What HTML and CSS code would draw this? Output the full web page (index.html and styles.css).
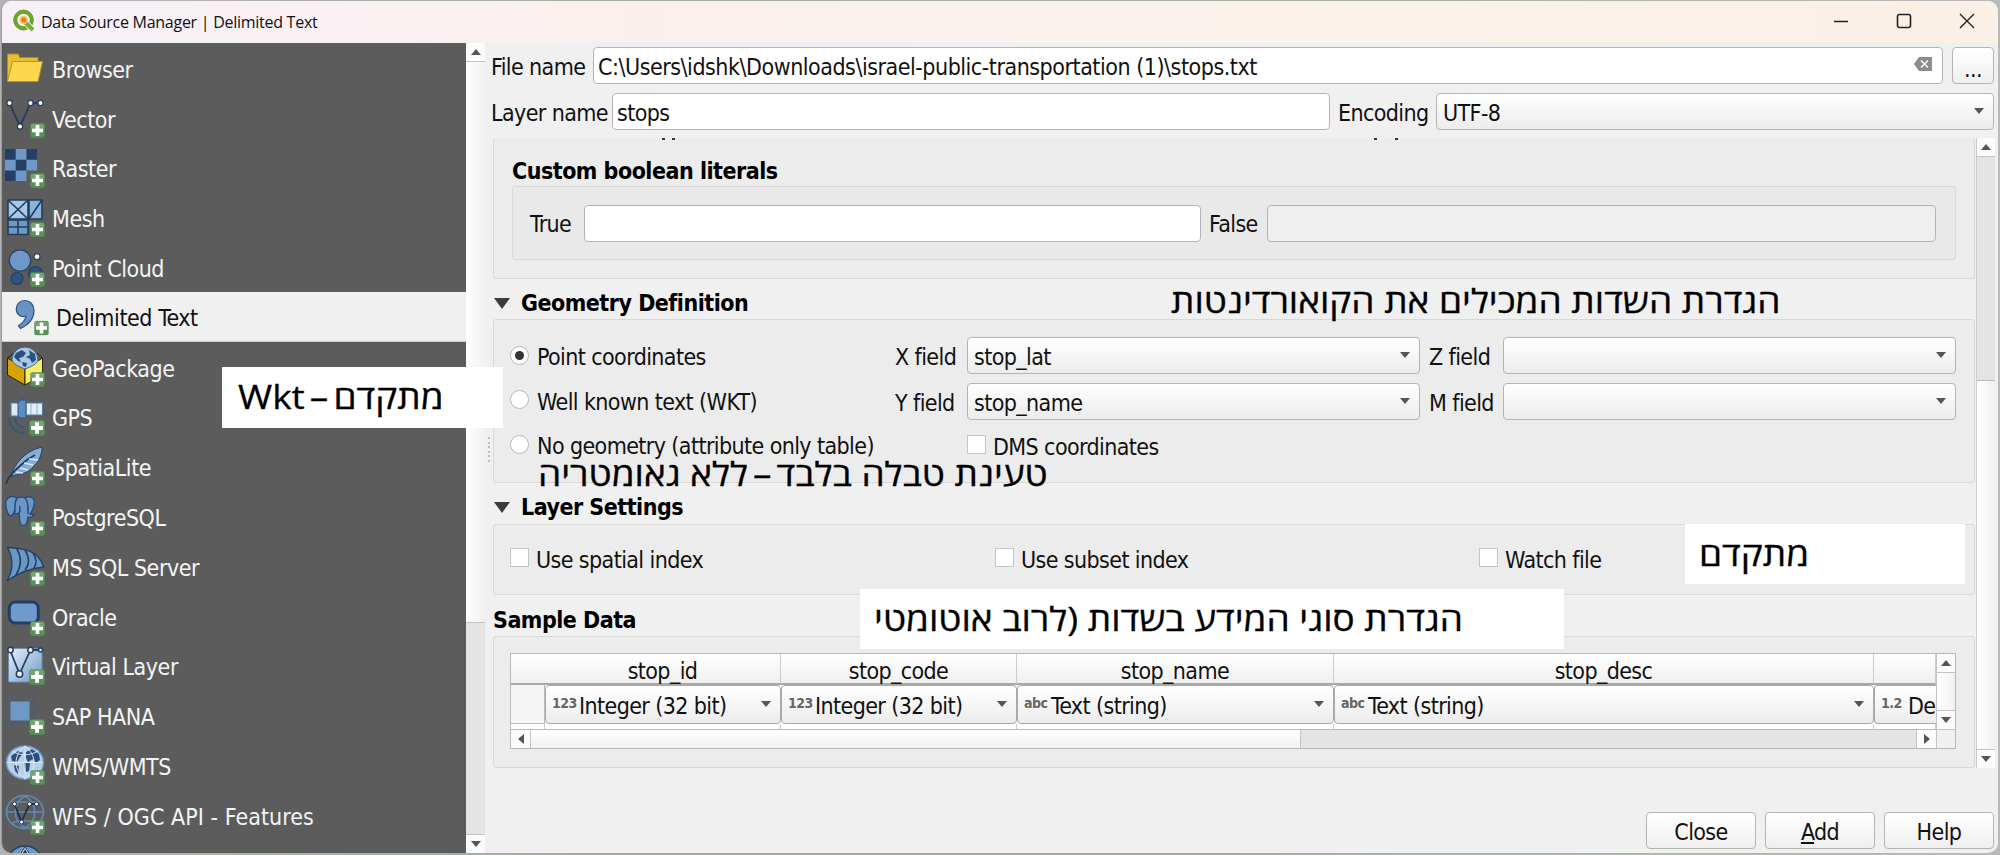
FILE: index.html
```html
<!DOCTYPE html>
<html lang="en">
<head>
<meta charset="utf-8">
<title>Data Source Manager | Delimited Text</title>
<link rel="stylesheet" href="styles.css">
</head>
<body>
<svg class="defs" width="0" height="0" aria-hidden="true">
  <defs>
    <linearGradient id="sky" x1="0" y1="0" x2="1" y2="1"><stop offset="0" stop-color="#e8f1fa"/><stop offset="1" stop-color="#6d98c8"/></linearGradient>
    <symbol id="plus" viewBox="0 0 15 15">
      <rect x=".3" y=".3" width="14.4" height="14.4" rx="2.5" fill="#579156"/>
      <rect x="1" y="1" width="13" height="6" rx="2" fill="#86b284" opacity=".6"/>
      <path d="M5.7 2h3.6v3.7H13v3.6H9.3V13H5.7V9.3H2V5.700h3.700z" fill="#fff"/>
    </symbol>
  </defs>
</svg>
<div class="window">
  <header class="titlebar">
    <svg class="logo" viewBox="0 0 24 24"><circle cx="11.500" cy="11" r="8.300" fill="none" stroke="#6fa52e" stroke-width="4.200"/><path d="M12 12l9 9" stroke="#f7f0f9" stroke-width="6"/><path d="M13 13l8 8" stroke="#76ad35" stroke-width="4"/><circle cx="11.800" cy="11" r="4.200" fill="#f6c65b"/><circle cx="11.800" cy="11" r="2.500" fill="#ee7913"/></svg>
    <span class="title">Data Source Manager | Delimited Text</span>
    <div class="controls">
      <svg viewBox="0 0 16 16"><path d="M1 8.500h14" stroke="#222" stroke-width="1.500"/></svg>
      <svg viewBox="0 0 16 16"><rect x="1.500" y="1.500" width="13" height="13" rx="2" fill="none" stroke="#222" stroke-width="1.600"/></svg>
      <svg viewBox="0 0 16 16"><path d="M1 1l14 14M15 1L1 15" stroke="#222" stroke-width="1.400"/></svg>
    </div>
  </header>
  <div class="body">
    <nav class="sidebar">
      <div class="item"><svg viewBox="1 0 48 50"><path d="M7.500 38V11h11l1 3.500H38V20" fill="#e8bf33" stroke="#b08f1c"/><path d="M12.500 18.500H42.500L38 38.500H7.500z" fill="#fdd84e" stroke="#b8971f"/></svg><span>Browser</span></div>
      <div class="item"><svg viewBox="1 0 48 50"><path d="M9.500 10L20 33.500 30.500 10h10" fill="none" stroke="#26405e" stroke-width="2"/><g fill="#fff" stroke="#26405e" stroke-width="1.200"><circle cx="9.500" cy="10" r="2.600"/><circle cx="20" cy="33.500" r="2.600"/><circle cx="30.500" cy="10" r="2.600"/><circle cx="40.500" cy="10" r="2.600"/></g><use href="#plus" x="30" y="30" width="15" height="15"/></svg><span>Vector</span></div>
      <div class="item"><svg viewBox="1 0 48 50"><path d="M5 6h32.100v21.400H26.400v10.700H5z" fill="#6d98c8"/><path d="M5 6h10.700v10.700H5zM26.400 6h10.700v10.700H26.400zM15.700 16.700h10.700v10.700H15.700zM5 27.400h10.700v10.700H5z" fill="#233f63"/><use href="#plus" x="30" y="30" width="15" height="15"/></svg><span>Raster</span></div>
      <div class="item"><svg viewBox="1 0 48 50"><g stroke="#203c5d" stroke-width="1.600"><path d="M8 8h20v19H8z" fill="#a9c7e6"/><path d="M29 8h13v19H29z" fill="#8db3db"/><path d="M8 8l20 19M28 8L8 27M42 8L29 27" fill="none"/><path d="M8 28h20v14.500H8z" fill="#6d98c8"/><path d="M18 28v14M8 35h20"/></g><use href="#plus" x="30" y="30" width="15" height="15"/></svg><span>Mesh</span></div>
      <div class="item"><svg viewBox="1 0 48 50"><g stroke="#26405e" stroke-width="1.200"><circle cx="20" cy="18.500" r="10.700" fill="#6d98c8"/><circle cx="37" cy="14.700" r="3" fill="#fff"/><circle cx="17" cy="36.500" r="6" fill="#2d5380"/><circle cx="35.500" cy="31.500" r="7" fill="#2d5380"/></g><use href="#plus" x="30" y="30" width="15" height="15"/></svg><span>Point Cloud</span></div>
      <div class="item selected"><svg viewBox="1 0 48 50"><path d="M24.500 9.500c5.500 0 9.500 4 9.500 10 0 8-5 14-13.500 18l-2-2.700c4.500-3 7-6 7.500-9.800-5 2-9.700-1.500-9.700-7 0-5 3.700-8.500 8.200-8.500z" fill="#6a93c4" stroke="#2f5686" stroke-width="1.200"/><use href="#plus" x="34" y="29.500" width="15" height="15"/></svg><span>Delimited Text</span></div>
      <div class="item"><svg viewBox="1 0 48 50"><path d="M7.500 16L25 27v16L7.500 33z" fill="#d8a300" stroke="#2b2200"/><path d="M42.500 16L25 27v16l17.500-10z" fill="#f8ee6a" stroke="#2b2200"/><path d="M7.500 16L14 11M42.500 16L37 11" stroke="#2b2200"/><path d="M12 18a13 13 0 1 1 26 0c0 3-6 6.500-13 9-7-2.500-13-6-13-9z" fill="#a9c7e6" stroke="#3f6798"/><path d="M16 11l6-3 4 3-3 4-4 1 2 4-3-1-4-4zM29 8l6 4 1 6-4 3-2-4-4-2 4-2zM22 20l5 1-1 4-3-1z" fill="#2b507d"/><use href="#plus" x="30" y="30" width="15" height="15"/></svg><span>GeoPackage</span></div>
      <div class="item"><svg viewBox="1 0 48 50"><rect x="11" y="12" width="9" height="13" fill="#dce9f5" stroke="#5078a8"/><rect x="26" y="12" width="16.500" height="12" fill="#e6eff8" stroke="#5078a8"/><path d="M31 12v12M37 12v12" stroke="#8fb0d2"/><path d="M20 9h6v18h-6l-2-3V12z" fill="#5f8cbe" stroke="#2d5380"/><path d="M9.500 27c0 9 6 15 15 15M15 27c0 5 4 9.500 9.500 9.500" fill="none" stroke="#3a567b" stroke-width="2.200"/><use href="#plus" x="29" y="29" width="16" height="16"/></svg><span>GPS</span></div>
      <div class="item"><svg viewBox="1 0 48 50"><path d="M11 35C14 24 24 10 42 6c0 7-3 15-9 20-4 5-10 7-17 8z" fill="#86add7" stroke="#26405e"/><path d="M6 43c2-7 9-14 15-19 5-5 8-7 14-10" fill="none" stroke="#203c5d" stroke-width="1.800"/><path d="M16 31l7 1M20 27l8 2M24 22l9 2M29 18l9 1" stroke="#dbe8f5" stroke-width="1.500"/><use href="#plus" x="30" y="30" width="15" height="15"/></svg><span>SpatiaLite</span></div>
      <div class="item"><svg viewBox="1 0 48 50"><path d="M8 7c3-2 7-1 9 0 3-1 6-1 8 0 4-2 8-1 9 2 1 5-1 10-4 14l4 1c-1 2-4 3-6 2-1 3 0 6-3 8-2 1-5 0-5-3l-1-9c-2 1-4 1-5-1-1 3-3 5-5 3C6 20 4 10 8 7z" fill="#6a97c8" stroke="#24497a" stroke-width="1.300"/><path d="M17 7c-3 5-2 10-2 14M25 7c4 4 3 10 3 16M19 22c2-2 0-5 1-7" fill="none" stroke="#24497a" stroke-width="1.500"/><use href="#plus" x="30" y="30" width="15" height="15"/></svg><span>PostgreSQL</span></div>
      <div class="item"><svg viewBox="1 0 48 50"><path d="M7.500 6.500C24 7 39 10 43.500 26c-12 1-25 6-37 14C13 31 14 18 7.500 6.500z" fill="#6a97c8" stroke="#24405f" stroke-width="1.400"/><path d="M17 8c5 9 4 18-1 26M25 9c5 8 4 15 0 20M33 12c4 6 4 10 1 15" fill="none" stroke="#24405f" stroke-width="1.600"/><use href="#plus" x="30" y="30" width="15" height="15"/></svg><span>MS SQL Server</span></div>
      <div class="item"><svg viewBox="1 0 48 50"><rect x="9.300" y="11" width="29" height="21" rx="6" fill="#7099cc" stroke="#223e66" stroke-width="3"/><use href="#plus" x="30" y="30" width="15" height="15"/></svg><span>Oracle</span></div>
      <div class="item"><svg viewBox="1 0 48 50"><rect x="8.500" y="8.500" width="33.500" height="33.500" rx="1" fill="url(#sky)" stroke="#6f8fb2"/><path d="M10 10l9.500 24L30.500 10M30.500 10h10" fill="none" stroke="#26405e" stroke-width="1.800"/><g fill="#eef4fa" stroke="#26405e" stroke-width="1.500"><circle cx="10.500" cy="10" r="2.700"/><circle cx="19.500" cy="34" r="3.200"/><circle cx="30.500" cy="10" r="2.700"/><circle cx="40.500" cy="10" r="2"/></g><use href="#plus" x="29" y="29" width="16" height="16"/></svg><span>Virtual Layer</span></div>
      <div class="item"><svg viewBox="1 0 48 50"><rect x="10.500" y="11.500" width="19" height="19" fill="#6d98c8"/><path d="M6.500 6.500h27v27h-27z" fill="none" stroke="#3a5a84" stroke-width="2" stroke-dasharray="2 3.400"/><use href="#plus" x="29" y="29" width="16" height="16"/></svg><span>SAP HANA</span></div>
      <div class="item"><svg viewBox="1 0 48 50"><ellipse cx="25" cy="22.500" rx="18.500" ry="16.500" fill="#b7d0ea" stroke="#6d98c8" stroke-width="1.500"/><path d="M11 16l7-5 5 2-3 4-3 5-5-1zM14 25l5 1-1 8-3-3zM26 12l6-3 7 5 1 6-4 3-3-4-5 3-2-4zM24 22l6 1-1 8-3 1z" fill="#2b507d"/><path d="M7 22.500h36M25 6v33M12 11c8 5 18 5 26 0M25 6c-12 9-12 24 0 33M25 6c12 9 12 24 0 33" fill="none" stroke="#e2edf7" stroke-width=".9"/><use href="#plus" x="30" y="30" width="15" height="15"/></svg><span>WMS/WMTS</span></div>
      <div class="item"><svg viewBox="1 0 48 50"><g fill="none" stroke="#6288b4" stroke-width="1.700"><ellipse cx="25" cy="22" rx="18.500" ry="16.500"/><path d="M7 22h36M12 12h26M25 6c-13 8-13 24 0 32M25 6c13 8 13 24 0 32M12 33c8-3 16-3 24 0"/></g><path d="M14.500 14l7 18 8-18h7" fill="none" stroke="#1e3248" stroke-width="1.800"/><g fill="#fff" stroke="#1e3248"><circle cx="14.500" cy="14" r="2"/><circle cx="21.500" cy="32" r="2"/><circle cx="29.500" cy="14" r="2"/><circle cx="36.500" cy="14" r="2"/></g><use href="#plus" x="30" y="30" width="15" height="15"/></svg><span class="wide">WFS / OGC API - Features</span></div>
      <div class="item"><svg viewBox="1 0 48 50"><circle cx="25" cy="24" r="18" fill="#6d98c8" stroke="#26405e" stroke-width="1.500"/><path d="M18 18l7-11 7 11z" fill="#fff" stroke="#26405e"/><path d="M25 9l5 9H20z" fill="#233f63"/></svg></div>
    </nav>
    <div class="vscroll side-scroll"><i class="btn up"></i><i class="thumb"></i><i class="groove"></i><i class="btn down"></i></div>
    <main class="main">
      <div class="row file-row">
        <label class="w-file">File name</label>
        <div class="input path"><span>C:\Users\idshk\Downloads\israel-public-transportation (1)\stops.txt</span>
          <svg class="clear" viewBox="0 0 18 14"><path d="M5 0h13v14H5L0 7z" fill="#8c8c8c"/><path d="M7 3.500l7 7M14 3.500l-7 7" stroke="#fff" stroke-width="1.400"/></svg></div>
        <div class="button dots">...</div>
      </div>
      <div class="row layer-row">
        <label class="w-layer">Layer name</label>
        <div class="input layer">stops</div>
        <label class="w-enc">Encoding</label>
        <div class="combo enc">UTF-8</div>
      </div>
      <div class="scroller">
        <div class="content">
          <section class="panel top-panel">
            <div class="cut"><i></i><i></i><i></i><i></i></div>
            <h2>Custom boolean literals</h2>
            <div class="panel inner">
              <label class="w-true">True</label><div class="input true"></div>
              <label class="w-false">False</label><div class="input false"></div>
            </div>
          </section>
          <h2 class="fold geo">Geometry Definition</h2>
          <section class="panel geo-panel">
            <div class="radios">
              <div class="opt"><i class="radio on"></i><span>Point coordinates</span></div>
              <div class="opt"><i class="radio"></i><span>Well known text (WKT)</span></div>
              <div class="opt"><i class="radio"></i><span>No geometry (attribute only table)</span></div>
            </div>
            <div class="fields">
              <label>X field</label><div class="combo">stop_lat</div><label class="r">Z field</label><div class="combo"></div>
              <label>Y field</label><div class="combo">stop_name</div><label class="r">M field</label><div class="combo"></div>
              <div class="opt dms"><i class="check"></i><span>DMS coordinates</span></div>
            </div>
          </section>
          <h2 class="fold lay">Layer Settings</h2>
          <section class="panel lay-panel">
            <div class="opt"><i class="check"></i><span>Use spatial index</span></div>
            <div class="opt"><i class="check"></i><span>Use subset index</span></div>
            <div class="opt"><i class="check"></i><span>Watch file</span></div>
          </section>
          <h2 class="sample">Sample Data</h2>
          <section class="panel sample-panel">
            <div class="table">
              <div class="grid">
                <div class="th corner"></div><div class="th">stop_id</div><div class="th">stop_code</div><div class="th">stop_name</div><div class="th">stop_desc</div><div class="th"></div>
                <div class="rh"></div>
                <div class="combo cell"><b>123</b>Integer (32 bit)</div><div class="combo cell"><b>123</b>Integer (32 bit)</div><div class="combo cell"><b>abc</b>Text (string)</div><div class="combo cell"><b>abc</b>Text (string)</div><div class="combo cell cut-cell"><b>1.2</b>De</div>
                <div class="td"></div><div class="td"></div><div class="td"></div><div class="td"></div><div class="td"></div><div class="td"></div>
              </div>
              <div class="vscroll grid-v"><i class="btn up"></i><i class="thumb"></i><i class="btn down"></i></div>
              <div class="hscroll"><i class="btn left"></i><i class="thumb"></i><i class="groove"></i><i class="btn right"></i></div>
              <div class="sizer"></div>
            </div>
          </section>
        </div>
        <div class="vscroll main-scroll"><i class="btn up"></i><i class="groove"></i><i class="thumb"></i><i class="btn down"></i></div>
      </div>
      <footer class="actions"><div class="button">Close</div><div class="button"><span><u>A</u>dd</span></div><div class="button">Help</div></footer>
    </main>
  </div>
</div>
<i class="grip"></i>
<div class="note n-wkt" dir="rtl"><span>מתקדם<em> – </em>Wkt</span></div>
<div class="note n-geo" dir="rtl"><span>הגדרת השדות המכילים את הקואורדינטות</span></div>
<div class="note n-none" dir="rtl"><span>טעינת טבלה בלבד<em> – </em>ללא גאומטריה</span></div>
<div class="note n-adv" dir="rtl"><span>מתקדם</span></div>
<div class="note n-types" dir="rtl"><span>הגדרת סוגי המידע בשדות (לרוב אוטומטי</span></div>
</body>
</html>
```
FILE: styles.css
```css
* { box-sizing: border-box; }
body {
  margin: 0; width: 2000px; height: 855px; overflow: hidden; position: relative;
  padding: 1px 2px 2px 1px;
  background: linear-gradient(90deg, #b4b4b4, #a5ada0 30%, #a5ada0 60%, #b9b9b9);
  font: 23px/30px "DejaVu Sans Condensed", "DejaVu Sans", Tahoma, sans-serif;
  font-stretch: condensed; letter-spacing: -0.6px; color: #111; white-space: nowrap;
}
i { display: block; }
.defs { position: absolute; }
.window { width: 1997px; height: 852px; border-radius: 10px; overflow: hidden; background: #f0f0f0; border-left: 1px solid #999; }
.titlebar { height: 42px; display: flex; align-items: center; padding: 0 23px 3px 10px; background: linear-gradient(90deg, #f7f0f9, #f9f0ef 25%, #faf2ec 60%, #faf0e6); }
.logo { width: 24px; height: 24px; margin-right: 5px; }
.title { font: 16px/24px "Open Sans", "Noto Sans", sans-serif; letter-spacing: -0.27px; padding-top: 2px; flex: 1; }
.controls { display: flex; gap: 47px; }
.controls svg { width: 16px; height: 16px; }
.body { display: flex; height: 810px; }

.sidebar { width: 464px; background: #5c5c5c; overflow: hidden; color: #f4f4f4; letter-spacing: -0.45px; }
.item { height: 49.8px; display: flex; align-items: center; }
.item svg { width: 48px; height: 50px; margin-right: 3px; margin-left: -1px; flex: none; }
.item span { padding-top: 4px; }
.item .wide { letter-spacing: 0.05px; }
.selected { background: #f0f0f0; color: #111; border-bottom: 1px solid #ccc; }
.selected span { padding-left: 4px; }

.vscroll { display: flex; flex-direction: column; width: 19px; flex: none; }
.thumb { background: linear-gradient(90deg, #fff, #f1f1f1); }
.groove { background: #e4e4e4; }
.btn { background: #fbfbfb; height: 19px; display: flex; align-items: center; justify-content: center; flex: none; }
.btn::after { content: ""; border: 5px solid transparent; }
.up::after { border-width: 0 5px 6px; border-bottom-color: #555; }
.down::after { border-width: 6px 5px 0; border-top-color: #555; }
.left::after { border-width: 5px 6px 5px 0; border-right-color: #555; }
.right::after { border-width: 5px 0 5px 6px; border-left-color: #555; }
.up { border-bottom: 1px solid #c4c4c4; }
.down { border-top: 1px solid #c4c4c4; }
.side-scroll .thumb { height: 561px; border-bottom: 1px solid #c4c4c4; }
.side-scroll .groove { flex: 1; }

.main { flex: 1; padding: 4px 0 0 6px; }
.row { display: flex; align-items: center; height: 37px; }
.row + .row { margin-top: 9px; }
.input, .combo, .button { height: 37px; border: 1.500px solid #b4b4b4; border-radius: 4px; background: #fff; flex: none; padding: 2px 0 0 4px; display: flex; align-items: center; }
label { flex: none; padding-top: 2px; }
.combo { background: linear-gradient(#fff, #ececec); padding-left: 6px; position: relative; }
.combo::after { content: ""; position: absolute; right: 9px; top: 14px; border: 5.500px solid transparent; border-width: 6px 5.500px 0; border-top-color: #555; }
.button { background: linear-gradient(#fff, #efefef); padding: 2px 0 0; justify-content: center; }
.w-file { width: 102px; }
.path { width: 1350px; justify-content: space-between; padding-right: 10px; letter-spacing: -0.47px; }
.clear { width: 18px; height: 14px; margin-top: -6px; }
.dots { width: 42px; margin-left: 9px; padding-top: 6px; }
.w-layer { width: 121px; }
.layer { width: 718px; }
.w-enc { width: 106px; padding-left: 8px; }
.enc { width: 558px; }

.scroller { display: flex; height: 630px; margin-top: 8px; overflow: hidden; }
.content { width: 1485px; padding-left: 2px; flex: none; }
.main-scroll { border-left: 1px solid #ccc; }
.main-scroll .groove { height: 224px; border-bottom: 1px solid #bbb; }
.main-scroll .thumb { flex: 1; }
.panel { background: #ececec; border: 1.500px solid #d8d8d8; border-radius: 3px; width: 1482px; }
h2 { margin: 0; font: bold 23px/30px "DejaVu Sans Condensed", "DejaVu Sans", sans-serif; font-stretch: condensed; letter-spacing: -0.9px; letter-spacing: -0.5px; color: #000; }
.top-panel { height: 141px; border-top: 0; padding-left: 18px; position: relative; }
.top-panel h2 { padding-top: 18px; }
.cut { position: absolute; inset: 0 0 auto 0; height: 3px; }
.cut i { position: absolute; top: 0; width: 3px; height: 2px; background: #333; left: 168px; }
.cut i:nth-child(2) { left: 178px; }
.cut i:nth-child(3) { left: 880px; }
.cut i:nth-child(4) { left: 901px; }
.inner { width: 1444px; height: 74px; display: flex; align-items: center; padding-left: 17px; background: #e9e9e9; }
.w-true { width: 54px; }
.true { width: 617px; }
.w-false { width: 66px; padding-left: 8px; }
.false { width: 669px; background: #efefef; }
.fold { padding-left: 28px; position: relative; }
.fold::before { content: ""; position: absolute; left: 1px; top: 10px; border: 8px solid transparent; border-width: 11px 8px 0; border-top-color: #3c3c3c; }
.geo { margin-top: 9px; height: 31px; }
.geo-panel { height: 164px; display: flex; padding: 17px 0 0 16px; }
.radios { width: 385px; padding-top: 4px; }
.opt { display: flex; align-items: center; height: 30px; }
.opt span { padding-top: 2px; }
.radios .opt { margin-bottom: 14.500px; }
.radio { width: 19px; height: 19px; border-radius: 50%; background: #fff; border: 1.500px solid #b8b8b8; margin-right: 8px; flex: none; display: flex; align-items: center; justify-content: center; margin-top: -2px; }
.on::after { content: ""; width: 9px; height: 9px; border-radius: 50%; background: #333; }
.check { width: 19px; height: 19px; background: #fff; border: 1.500px solid #c6c6c6; margin-right: 7px; flex: none; margin-top: -3px; }
.fields { display: grid; grid-template-columns: 72px 453px 83px 453px; grid-template-rows: 37px 37px 30px; row-gap: 9px; align-items: center; height: 122px; }
.fields .r { padding-left: 9px; }
.dms { grid-column: 2 / 4; margin-top: 4px; }
.lay { margin-top: 9px; height: 32px; }
.lay-panel { height: 71px; display: grid; grid-template-columns: 485px 484px 300px; padding: 19px 0 0 16px; }
.sample { margin-top: 9px; height: 32px; padding-left: 0; padding-top: 1px; }
.sample-panel { height: 132px; padding: 16px 0 0 16px; }
.table { width: 1446px; height: 96px; border: 1.500px solid #b8b8b8; display: grid; grid-template-columns: 1425px 19px; grid-template-rows: 75px 19px; background: #fff; }
.grid { display: grid; grid-template-columns: 34px 236px 236px 317px 540px 62px; grid-template-rows: 31px 39px 5px; overflow: hidden; }
.th { background: linear-gradient(#fff, #f0f0f0); border-right: 1px solid #ccc; border-bottom: 2px solid #a8a8a8; text-align: center; line-height: 34px; height: 31px; }
.corner { border-right: 0; }
.rh { background: #f5f5f5; border-right: 1px solid #bbb; border-bottom: 1px solid #bbb; }
.cell { height: 39px; border-color: #a9a9a9; }
.cell b { width: 27px; font-size: 14px; letter-spacing: -0.5px; color: #666; margin-top: -6px; }
.cell::after { top: 15px; }
.cut-cell { overflow: hidden; border-right: 0; border-radius: 4px 0 0 4px; }
.cut-cell::after { content: none; }
.td { border-right: 1px solid #ccc; }
.grid-v { border-left: 1px solid #c4c4c4; }
.grid-v .thumb { flex: 1; }
.hscroll { display: flex; border-top: 1px solid #bbb; }
.hscroll .btn { width: 19px; height: 18px; }
.hscroll .thumb { width: 771px; border: solid #c4c4c4; border-width: 0 1px; background: linear-gradient(#fff, #f1f1f1); }
.hscroll .groove { flex: 1; border-right: 1px solid #c4c4c4; }
.sizer { background: #f0f0f0; border: solid #c4c4c4; border-width: 1px 0 0 1px; }
.actions { display: flex; gap: 9px; margin-top: 44px; justify-content: flex-end; padding-right: 4px; }
.actions .button { width: 110px; }

.grip { position: absolute; left: 488px; top: 437px; width: 2px; height: 25px; background: repeating-linear-gradient(#bbb 0 2px, #f0f0f0 2px 4.500px); }
.note { position: absolute; background: #fff; color: #000; font: 33px/60px "Open Sans", "Noto Sans", sans-serif; letter-spacing: 0; text-align: left; }
.note span { display: inline-block; transform: scaleX(1.12); transform-origin: 0 50%; -webkit-text-stroke: 0.3px #000; }
.note em { font-style: normal; word-spacing: -4px; }
.n-wkt { left: 222px; top: 367px; width: 281px; height: 61px; padding-left: 16px; }
.n-geo { left: 1171px; top: 271px; background: none; }
.n-none { left: 538px; top: 444px; background: none; }
.n-adv { left: 1685px; top: 524px; width: 280px; height: 60px; padding-left: 14px; }
.n-types { left: 860px; top: 589px; width: 704px; height: 60px; padding-left: 14px; }
```
